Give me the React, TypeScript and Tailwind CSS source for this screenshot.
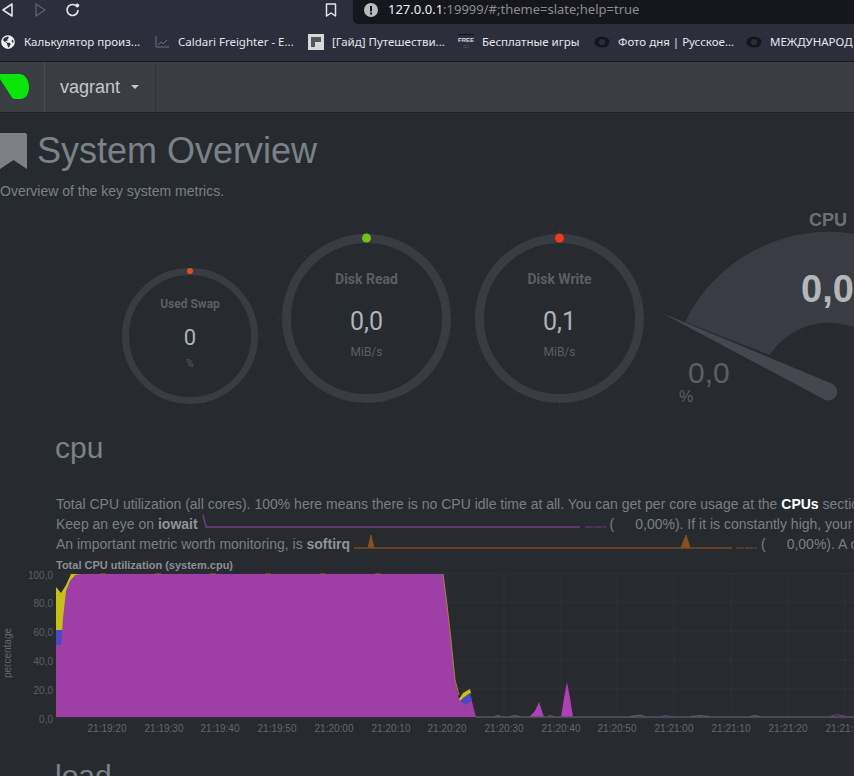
import React from "react";
import { FaGlobeAmericas } from "react-icons/fa";

const sans = "font-['Liberation_Sans',Arial,sans-serif]";

function Ticks({ c, r, len, n }: { c: number; r: number; len: number; n: number }) {
  const items = [];
  for (let i = 0; i < n; i++) {
    const a = (i / n) * Math.PI * 2;
    items.push(
      <line
        key={i}
        x1={c + Math.cos(a) * r}
        y1={c + Math.sin(a) * r}
        x2={c + Math.cos(a) * (r + (i % 4 === 0 ? len * 2 : len))}
        y2={c + Math.sin(a) * (r + (i % 4 === 0 ? len * 2 : len))}
        stroke="#303439"
        strokeWidth="1"
      />
    );
  }
  return <>{items}</>;
}

function Ring({
  size,
  title,
  value,
  unit,
  dot,
  dotR,
  stroke,
  big,
}: {
  size: number;
  title: string;
  value: string;
  unit: string;
  dot: string;
  dotR: number;
  stroke: number;
  big: boolean;
}) {
  const pad = 8;
  const c = size / 2 + pad;
  const r = size / 2 - stroke / 2;
  return (
    <div className="relative shrink-0 flex flex-col items-center" style={{ width: size, height: size }}>
      <svg
        className="absolute"
        style={{ left: -pad, top: -pad }}
        width={size + pad * 2}
        height={size + pad * 2}
      >
        <Ticks c={c} r={size / 2 + 1} len={2} n={32} />
        <circle cx={c} cy={c} r={r} fill="none" stroke="#393c42" strokeWidth={stroke} />
        <circle cx={c} cy={pad + stroke / 2 - 0.5} r={dotR} fill={dot} />
      </svg>
      {big ? (
        <div className="relative flex flex-col items-center font-['Roboto',sans-serif]">
          <div className="mt-[37px] text-[14px] leading-[16px] font-bold text-[#5b5f65]">{title}</div>
          <div className="mt-[21px] text-[25px] leading-[28px] text-[#b0b2b5]">{value}</div>
          <div className="mt-[9px] text-[12px] leading-[14px] text-[#5b5f65]">{unit}</div>
        </div>
      ) : (
        <div className="relative flex flex-col items-center font-['Roboto',sans-serif]">
          <div className="mt-[29px] text-[12px] leading-[14px] font-bold text-[#5b5f65]">{title}</div>
          <div className="mt-[14px] text-[22px] leading-[26px] text-[#b0b2b5]">{value}</div>
          <div className="mt-[7px] text-[10px] leading-[12px] text-[#5b5f65]">{unit}</div>
        </div>
      )}
    </div>
  );
}

function Mark({ w, label, icon }: { w: number; label: string; icon: React.ReactNode }) {
  return (
    <div className="flex items-center shrink-0" style={{ width: w }}>
      <div className="w-[16px] h-[16px] flex items-center justify-center shrink-0">{icon}</div>
      <span className="ml-[8px] whitespace-nowrap text-[11.5px] text-[#e6e6ea] font-['Noto_Sans',sans-serif]">{label}</span>
    </div>
  );
}

const Eye = () => (
  <svg width="16" height="12" viewBox="0 0 16 12">
    <ellipse cx="8" cy="6" rx="7.5" ry="5.5" fill="#15161c" />
    <circle cx="8" cy="6" r="3" fill="#2b2d36" />
  </svg>
);

const xTicks = [
  ["21:19:20", 107],
  ["21:19:30", 164],
  ["21:19:40", 220],
  ["21:19:50", 277],
  ["21:20:00", 334],
  ["21:20:10", 391],
  ["21:20:20", 447],
  ["21:20:30", 504],
  ["21:20:40", 561],
  ["21:20:50", 617],
  ["21:21:00", 674],
  ["21:21:10", 731],
  ["21:21:20", 788],
  ["21:21:30", 845],
] as const;

const yTicks = [
  ["100,0", 1],
  ["80,0", 29],
  ["60,0", 58],
  ["40,0", 87],
  ["20,0", 116],
  ["0,0", 145],
] as const;

function Chart() {
  // svg origin: x = page x, y = page y - 573
  return (
    <svg width="854" height="170" className="block overflow-visible">
      {yTicks.map(([, y]) => (
        <line key={y} x1="56" x2="854" y1={y} y2={y} stroke="#2e3237" strokeWidth="1" />
      ))}
      {xTicks.map(([, x]) => (
        <line key={x} x1={x} x2={x} y1="0" y2="144" stroke="#2e3237" strokeWidth="1" />
      ))}
      <polygon points="56,14 61,20 66,12 71,1 82,1 82,60 56,60" fill="#c4c410" />
      <polygon points="56,57 62,57 62,72 56,72" fill="#4a48c4" />
      <polygon
        points="56,144 56,72 61,72 63,45 66,18 70,8 75,2 80,1 443,1 447,32 451,67 455,107 459,126 466,122 471,125 476,144"
        fill="#a03ea8"
      />
      <line x1="100" x2="430" y1="1" y2="1" stroke="#a85a3a" strokeWidth="1" strokeDasharray="6 49" />
      <polyline points="443,1 447,32 451,67 455,107 459,122" fill="none" stroke="#a8882c" strokeWidth="1" />
      <polygon points="459,126 463,120 470,116 471,120 464,124 460,128" fill="#c4c410" />
      <polygon points="460,128 470,120 472,127 466,132" fill="#4a48c4" />
      <polygon points="529,144 535,138 539,129 544,144" fill="#b13fb8" />
      <polygon points="561,144 564,125 567,109 570,125 573,144" fill="#b13fb8" />
      <line x1="476" x2="854" y1="144" y2="144" stroke="#55585d" strokeWidth="1.5" />
      <polyline points="495,143.5 498,142.5 501,143.5" fill="none" stroke="#6a6a44" />
      <polyline points="510,143.5 515,142.5 520,143.5" fill="none" stroke="#5f6165" />
      <polyline points="548,143.5 550,142.5 554,143.5" fill="none" stroke="#5f6165" />
      <polyline points="630,143.5 640,142 645,143.5" fill="none" stroke="#5f6165" />
      <polyline points="660,143.5 665,142.5 672,143.5" fill="none" stroke="#4c4878" />
      <polyline points="690,143.5 700,142.5 710,143.5" fill="none" stroke="#5f6165" />
      <polyline points="750,143.5 755,142.5 760,143.5" fill="none" stroke="#5f6165" />
      <polyline points="830,143.5 837,141.5 846,143.5" fill="none" stroke="#74407a" />
      {yTicks.map(([t, y]) => (
        <text key={t} x="53" y={y + 5} textAnchor="end" fontSize="10" fill="#5c6065" fontFamily="Liberation Sans">
          {t}
        </text>
      ))}
      {xTicks.map(([t, x]) => (
        <text key={t} x={x} y="159" textAnchor="middle" fontSize="10" fill="#63676c" fontFamily="Liberation Sans">
          {t}
        </text>
      ))}
      <text
        transform="translate(11,80) rotate(-90)"
        textAnchor="middle"
        fontSize="10"
        fill="#63676c"
        fontFamily="Liberation Sans"
      >
        percentage
      </text>
    </svg>
  );
}

export default function App() {
  return (
    <div className={`w-[854px] h-[776px] overflow-hidden bg-[#272a2f] ${sans}`}>
      {/* browser toolbar */}
      <div className="h-[24px] bg-[#2c2e3b] flex items-start pt-[2px] relative">
        <svg width="14" height="16" viewBox="0 0 14 16" className="ml-[1px] shrink-0">
          <polygon points="11,2 2,8 11,14" fill="none" stroke="#e4e4e8" strokeWidth="1.6" strokeLinejoin="round" />
        </svg>
        <svg width="14" height="16" viewBox="0 0 14 16" className="ml-[19px] shrink-0">
          <polygon points="2,2 11,8 2,14" fill="none" stroke="#5c5e6a" strokeWidth="1.4" strokeLinejoin="round" />
        </svg>
        <svg width="16" height="16" viewBox="0 0 16 16" className="ml-[17px] shrink-0">
          <path d="M13 8 A5.5 5.5 0 1 1 10.5 3.4" fill="none" stroke="#e4e4e8" strokeWidth="1.7" />
          <circle cx="12.2" cy="3.6" r="2" fill="#e4e4e8" />
        </svg>
        <svg width="12" height="14" viewBox="0 0 12 14" className="ml-[244px] mt-[1px] shrink-0">
          <path d="M1.5 1 H10.5 V13 L6 10 L1.5 13 Z" fill="none" stroke="#e4e4e8" strokeWidth="1.5" strokeLinejoin="round" />
        </svg>
        <div className="ml-[16px] -mt-[2px] flex-1 h-[24px] bg-[#16171d] rounded-bl-[5px] flex items-center pb-[4px] pl-[11px] font-['Noto_Sans',sans-serif] text-[13px] whitespace-nowrap overflow-hidden">
          <svg width="14" height="14" viewBox="0 0 14 14" className="shrink-0">
            <circle cx="7" cy="7" r="7" fill="#b9bac0" />
            <rect x="6" y="3" width="2" height="5.5" fill="#16171d" />
            <rect x="6" y="9.5" width="2" height="2" fill="#16171d" />
          </svg>
          <span className="ml-[10px] text-[#f0f0f2]">127.0.0.1</span>
          <span className="text-[#8b8c94]">:19999/#;theme=slate;help=true</span>
        </div>
      </div>

      {/* bookmarks bar */}
      <div className="h-[38px] bg-[#2c2e3b] flex items-center pb-[2px] border-b border-[#191b1f] overflow-hidden whitespace-nowrap">
        <Mark w={154} label="Калькулятор произ..." icon={<FaGlobeAmericas className="text-[#eeeeee] text-[14px]" />} />
        <Mark
          w={154}
          label="Caldari Freighter - E..."
          icon={
            <svg width="14" height="12" viewBox="0 0 14 12">
              <path d="M1 0 V11 H14 M3 9 L6 6 L8 8 L12 4" fill="none" stroke="#6d6f78" strokeWidth="1" />
            </svg>
          }
        />
        <Mark
          w={150}
          label="[Гайд] Путешестви..."
          icon={
            <div className="w-[16px] h-[16px] bg-[#d8d8d8] flex items-center justify-center">
              <div className="w-[10px] h-[10px] bg-[#55575c] flex items-end justify-end">
                <div className="w-[6px] h-[5px] bg-[#d8d8d8]" />
              </div>
            </div>
          }
        />
        <Mark
          w={136}
          label="Бесплатные игры"
          icon={
            <div className="flex flex-col items-center w-[17px]">
              <div className="w-[16px] h-[1px] bg-[#111]" />
              <span className="text-[6px] leading-[7px] mt-[2px] font-bold text-[#d8d8e0]">FREE</span>
              <span className="text-[5px] leading-[5px] text-[#b0b0c0]">::::</span>
            </div>
          }
        />
        <Mark w={152} label="Фото дня | Русское..." icon={<Eye />} />
        <Mark w={120} label="МЕЖДУНАРОД" icon={<Eye />} />
      </div>

      {/* netdata navbar */}
      <div className="h-[51px] bg-[#3a3e43] border-b border-[#1e2024] flex items-stretch">
        <div className="w-[45px] border-r border-[#4a4e53] flex items-center shrink-0">
          <svg width="30" height="26" viewBox="0 0 30 26">
            <path d="M0 0 H19 C25 0 29 6 29 13 C29 20 26 25 20 25 H15 C13 25 12 24 11 22 L0 5 Z" fill="#0ae60a" />
          </svg>
        </div>
        <div className="w-[111px] border-r border-[#31353a] flex items-center pl-[15px] shrink-0">
          <span className="text-[18px] text-[#c8c8c8]">vagrant</span>
          <span className="ml-[11px] w-0 h-0 border-x-[4px] border-x-transparent border-t-[4px] border-t-[#c8c8c8]" />
        </div>
      </div>

      {/* overview */}
      <div className="flex items-center mt-[19px] h-[38px]">
        <svg width="27" height="37" viewBox="0 0 27 37" className="shrink-0">
          <path d="M2 0 H25 Q27 0 27 2 V36 L13.5 27 L0 36 V0 Z" fill="#7d8186" />
        </svg>
        <h1 className="ml-[10px] text-[36px] leading-[38px] font-normal text-[#7a8288] whitespace-nowrap">System Overview</h1>
      </div>
      <p className="mt-[11px] text-[14px] leading-[20px] text-[#7a8288]">Overview of the key system metrics.</p>

      {/* gauges */}
      <div className="mt-[9px] h-[194px] flex items-end pl-[122px] gap-[24px]">
        <Ring size={136} title="Used Swap" value="0" unit="%" dot="#e0501a" dotR={3} stroke={7} big={false} />
        <div className="flex gap-[24px] mb-[1px]">
          <Ring size={169} title="Disk Read" value="0,0" unit="MiB/s" dot="#78c010" dotR={4.5} stroke={9} big />
          <Ring size={169} title="Disk Write" value="0,1" unit="MiB/s" dot="#f03a12" dotR={4.5} stroke={9} big />
        </div>
        <div className="relative -ml-[6px] w-[193px] h-[194px] shrink-0 self-start">
          <svg width="260" height="194" className="absolute left-0 top-0">
            {/* origin is page (661,210) */}
            <path d="M23 112 A160 160 0 0 1 327 182 L237 182 A70 70 0 0 0 108 145 Z" fill="#393c42" />
            <path d="M0 103 L170.8 173.9 A9 9 0 0 1 163.2 190.1 Z" fill="#44474d" />
          </svg>
          <div className="absolute left-[147px] top-[0px] text-[18px] leading-[20px] font-bold text-[#6d7075]">CPU</div>
          <div className="absolute left-[139px] top-[57px] text-[38px] leading-[44px] font-bold text-[#b5b6b8]">0,0</div>
          <div className="absolute left-[26px] top-[146px] text-[30px] leading-[34px] text-[#5c5f64]">0,0</div>
          <div className="absolute left-[17px] top-[178px] text-[16px] leading-[18px] text-[#5c5f64]">%</div>
        </div>
      </div>

      {/* cpu section */}
      <h2 className="mt-[27px] ml-[55px] text-[30px] leading-[34px] font-normal text-[#7a8288]">cpu</h2>
      <div className="mt-[29px] ml-[56px] text-[14px] leading-[20px] text-[#7b7f84] whitespace-nowrap overflow-hidden">
        <div>
          Total CPU utilization (all cores). 100% here means there is no CPU idle time at all. You can get per core usage at the{" "}
          <b className="text-white">CPUs</b> section
        </div>
        <div>
          Keep an eye on <b className="text-[#8f9499]">iowait</b>{" "}
          <svg width="404" height="20" className="inline-block align-top">
            <polyline points="1,1 4,13 378,13" fill="none" stroke="#6d3f7c" strokeWidth="1.5" />
            <polyline points="383,13 404,13" fill="none" stroke="#6d3f7c" strokeWidth="1.2" strokeDasharray="8 1" />
          </svg>
          <span className="ml-[4px]">(</span>
          <span className="ml-[21px]">0,00%). If it is constantly high, your disks are a bottleneck</span>
        </div>
        <div>
          An important metric worth monitoring, is <b className="text-[#8f9499]">softirq</b>{" "}
          <svg width="403" height="20" className="inline-block align-top">
            <polygon points="14,14 17,1 20,14" fill="#8a4f1a" stroke="#8a5524" strokeWidth="0.8" />
            <polygon points="327,14 332,1 336,14" fill="#8a4f1a" stroke="#8a5524" strokeWidth="0.8" />
            <polyline points="0,14 378,14" fill="none" stroke="#7a4a20" strokeWidth="1.5" />
            <polyline points="382,14 403,14" fill="none" stroke="#7a4a20" strokeWidth="1.2" strokeDasharray="8 1" />
          </svg>
          <span className="ml-[4px]">(</span>
          <span className="ml-[21px]">0,00%). A constantly high percentage of softirq</span>
        </div>
      </div>
      <div className="mt-[4px] ml-[56px] text-[11px] leading-[14px] font-bold text-[#8a8f94] whitespace-nowrap">
        Total CPU utilization (system.cpu)
      </div>
      <div className="mt-[1px]">
        <Chart />
      </div>
      <h2 className="mt-[16px] ml-[55px] text-[30px] leading-[34px] font-normal text-[#7a8288]">load</h2>
    </div>
  );
}
